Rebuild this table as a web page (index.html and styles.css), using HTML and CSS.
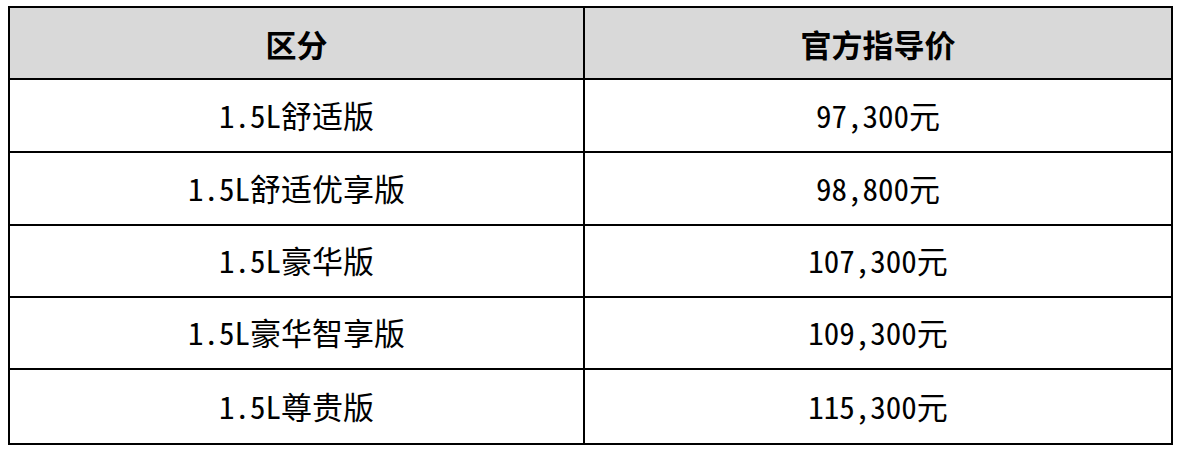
FILE: index.html
```html
<!DOCTYPE html>
<html lang="zh-CN">
<head>
<meta charset="utf-8">
<title>价格表</title>
<link rel="stylesheet" href="styles.css">
</head>
<body>
<div class="price-table">
  <div class="cell head">区分</div>
  <div class="cell head">官方指导价</div>
  <div class="cell">1.5L舒适版</div>
  <div class="cell">97,300元</div>
  <div class="cell">1.5L舒适优享版</div>
  <div class="cell">98,800元</div>
  <div class="cell">1.5L豪华版</div>
  <div class="cell">107,300元</div>
  <div class="cell">1.5L豪华智享版</div>
  <div class="cell">109,300元</div>
  <div class="cell">1.5L尊贵版</div>
  <div class="cell">115,300元</div>
</div>
</body>
</html>
```
FILE: styles.css
```css
html, body {
  margin: 0;
  padding: 0;
  background: #ffffff;
}
.price-table {
  margin: 6px 0 0 8px;
  display: grid;
  grid-template-columns: 575px 588px;
  grid-template-rows: 72px 73px 73px 72px 72px 75px;
  width: 1165px;
  box-sizing: border-box;
  border-top: 2px solid #000;
  border-left: 2px solid #000;
  font-family: "Noto Sans Mono CJK SC", "Noto Sans CJK SC", sans-serif;
  font-feature-settings: "hwid" 1;
  font-size: 31px;
  color: #000;
}
.cell {
  box-sizing: border-box;
  border-right: 2px solid #000;
  border-bottom: 2px solid #000;
  display: flex;
  align-items: center;
  justify-content: center;
  line-height: 1;
  padding-bottom: 3px;
}
.head {
  background: #d9d9d9;
  font-weight: 700;
  padding-bottom: 0;
}
```
